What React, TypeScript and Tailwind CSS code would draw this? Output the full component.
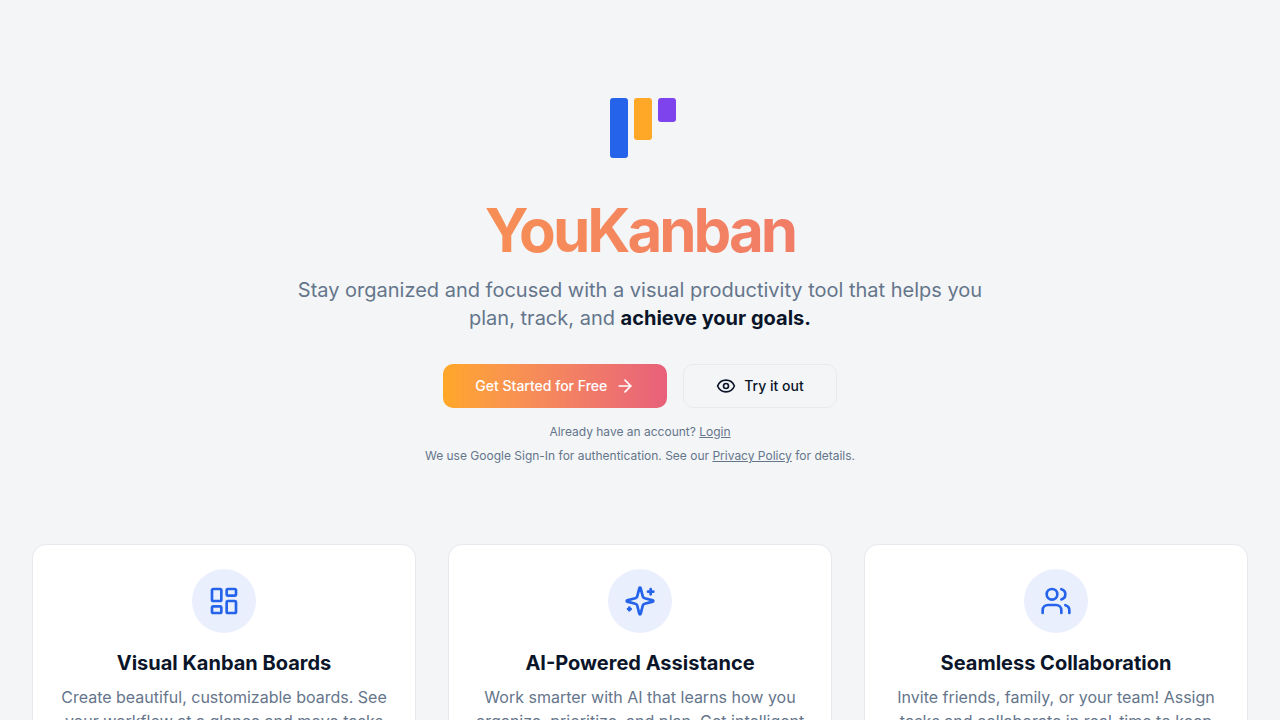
import React from 'react'
import { ArrowRight, Eye, LayoutDashboard, Users } from 'lucide-react'

const Logo = () => (
  <svg className="size-24" viewBox="0 0 32 32" aria-hidden="true">
    <rect x="6" y="6" width="6" height="20" rx="1" fill="#2563eb" />
    <rect x="14" y="6" width="6" height="14" rx="1" fill="#ffa726" />
    <rect x="22" y="6" width="6" height="8" rx="1" fill="#7e43ec" />
  </svg>
)

const Sparkles = ({ className }: { className?: string }) => (
  <svg
    className={className}
    viewBox="0 0 24 24"
    fill="none"
    stroke="currentColor"
    strokeWidth="2"
    strokeLinecap="round"
    strokeLinejoin="round"
    aria-hidden="true"
  >
    <path d="M9.937 15.5A2 2 0 0 0 8.5 14.063l-6.135-1.582a.5.5 0 0 1 0-.962L8.5 9.936A2 2 0 0 0 9.937 8.5l1.582-6.135a.5.5 0 0 1 .963 0L14.063 8.5A2 2 0 0 0 15.5 9.937l6.135 1.581a.5.5 0 0 1 0 .964L15.5 14.063a2 2 0 0 0-1.437 1.437l-1.582 6.135a.5.5 0 0 1-.963 0z" />
    <path d="M20 3v4" />
    <path d="M22 5h-4" />
    <path d="M4 17v2" />
    <path d="M5 18H3" />
  </svg>
)

const features = [
  {
    icon: LayoutDashboard,
    title: 'Visual Kanban Boards',
    text: 'Create beautiful, customizable boards. See your workflow at a glance and move tasks with ease.',
  },
  {
    icon: Sparkles,
    title: 'AI-Powered Assistance',
    text: 'Work smarter with AI that learns how you organize, prioritize, and plan. Get intelligent suggestions.',
  },
  {
    icon: Users,
    title: 'Seamless Collaboration',
    text: 'Invite friends, family, or your team! Assign tasks and collaborate in real-time to keep everyone in sync.',
  },
]

const App = () => {
  return (
    <div className="min-h-screen bg-[#f3f5f7] font-['Inter',sans-serif] text-[#0b1529]">
      <main className="mx-auto max-w-7xl px-8 py-20">
        <section className="flex flex-col items-center text-center">
          <Logo />
          <h1 className="mt-6 w-full bg-linear-to-r from-[#ffa726] to-[#e8607a] bg-clip-text text-6xl leading-none font-bold tracking-tighter text-transparent">
            YouKanban
          </h1>
          <p className="mt-4 max-w-[700px] text-xl text-[#65758b]">
            Stay organized and focused with a visual productivity tool that helps you plan, track, and{' '}
            <strong className="font-bold text-[#0b1529]">achieve your goals.</strong>
          </p>
          <div className="mt-8 flex flex-wrap justify-center gap-4">
            <button
              type="button"
              className="flex h-11 items-center gap-2 rounded-[10px] bg-linear-to-r from-[#ffa726] to-[#e8607a] px-8 text-sm font-medium text-white"
            >
              Get Started for Free
              <ArrowRight className="size-5" />
            </button>
            <button
              type="button"
              className="flex h-11 items-center gap-2 rounded-[10px] border border-[#e8ebee] px-8 text-sm font-medium"
            >
              <Eye className="size-5" />
              Try it out
            </button>
          </div>
          <p className="mt-4 text-xs text-[#65758b]">
            Already have an account?{' '}
            <a href="#login" className="underline">
              Login
            </a>
          </p>
          <p className="mt-2 text-xs text-[#65758b]">
            We use Google Sign-In for authentication. See our{' '}
            <a href="#privacy" className="underline">
              Privacy Policy
            </a>{' '}
            for details.
          </p>
        </section>

        <section className="mt-20 grid gap-8 md:grid-cols-3">
          {features.map(({ icon: Icon, title, text }) => (
            <div
              key={title}
              className="flex flex-col items-center rounded-[14px] border border-[#e5e8ec] bg-white p-6 text-center"
            >
              <div className="flex size-16 items-center justify-center rounded-full bg-[#e9effd] text-[#2563eb]">
                <Icon className="size-8" />
              </div>
              <h2 className="mt-4 text-xl font-bold">{title}</h2>
              <p className="mt-2 text-base text-[#65758b]">{text}</p>
            </div>
          ))}
        </section>
      </main>
    </div>
  )
}

export default App
